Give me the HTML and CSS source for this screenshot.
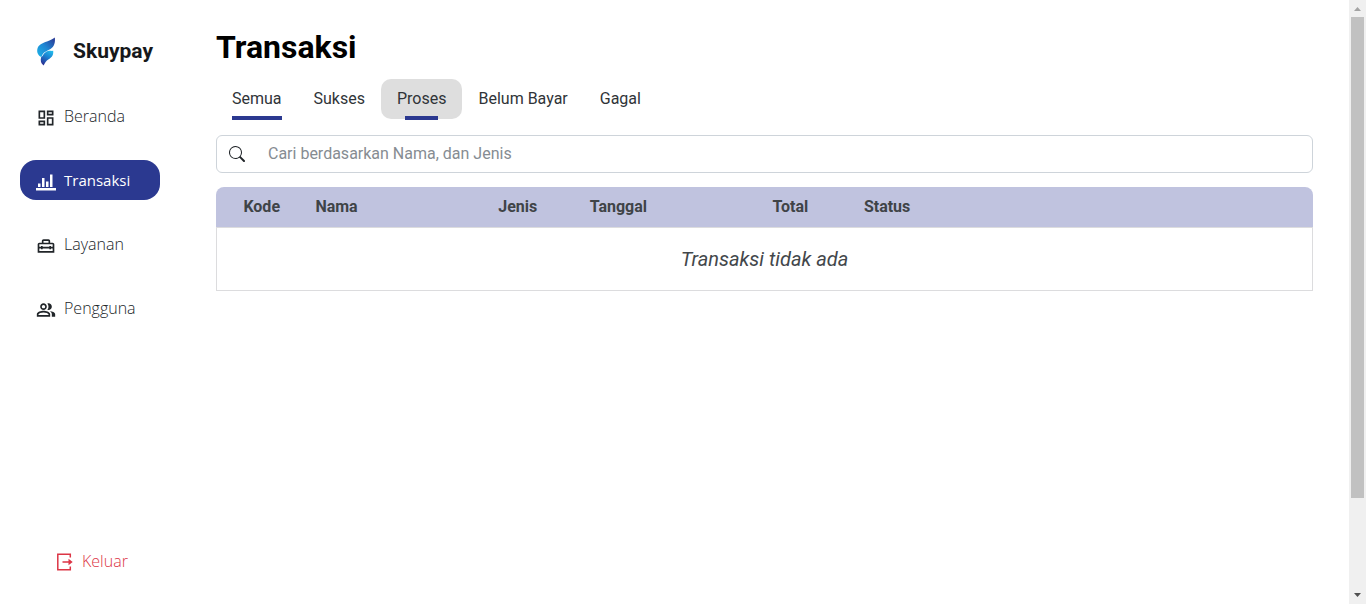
FILE: index.html
```html
<!DOCTYPE html>
<html lang="id">
<head>
<meta charset="utf-8">
<meta name="viewport" content="width=device-width, initial-scale=1">
<title>Skuypay - Transaksi</title>
<link rel="stylesheet" href="styles.css">
</head>
<body>
<div class="app">
  <aside class="sidebar">
    <a class="brand" href="#">
      <svg class="brand-logo" viewBox="0 0 20 30" aria-hidden="true">
        <defs>
          <linearGradient id="wing" x1="0" y1="1" x2="1" y2="0">
            <stop offset="0" stop-color="#1cb4e8"/><stop offset=".5" stop-color="#1f86d3"/><stop offset="1" stop-color="#2b3390"/>
          </linearGradient>
          <linearGradient id="tail" x1=".8" y1="0" x2=".3" y2="1">
            <stop offset="0" stop-color="#22b9ea"/><stop offset=".45" stop-color="#1a7fd0"/><stop offset="1" stop-color="#2b2f92"/>
          </linearGradient>
        </defs>
        <path fill="url(#wing)" d="M18.800 1.500C19.500 6.500 18.200 10.800 14.500 13C10.500 15.200 7 16 5.500 21C2 19.500.8 16.500 1.300 13.200C2.200 8.500 6.500 7 11 5.400C14.500 4.200 17 3.100 18.800 1.500Z"/>
        <path fill="url(#tail)" d="M17.200 14.800C17.600 18.800 16.200 21.200 12.700 23.200C9.900 24.800 9 26.900 7.600 29.500C4.800 27.500 4.300 24.700 5.100 21.300C7 20.500 7.500 16.300 12 15C14 14.500 15.800 15.200 17.200 14.800Z"/>
      </svg>
      <span>Skuypay</span>
    </a>
    <nav class="menu" aria-label="Menu utama">
      <a class="menu-item" href="#">
        <svg viewBox="0 0 24 24" aria-hidden="true"><path d="M19 5v2h-4V5h4M9 5v6H5V5h4m10 8v6h-4v-6h4M9 17v2H5v-2h4M21 3h-8v6h8V3zM11 3H3v10h8V3zm10 8h-8v10h8V11zm-10 4H3v6h8v-6z"/></svg>
        <span>Beranda</span>
      </a>
      <a class="menu-item menu-item-active" href="#" aria-current="page">
        <svg viewBox="0 0 20 20" aria-hidden="true"><path d="M0 16h20v2.500H0zM2 11.500h2.500V15H2zM6 6h2.500v9H6zM10 9.500h2.500V15H10zM14 2.500h2.500V15H14z"/></svg>
        <span>Transaksi</span>
      </a>
      <a class="menu-item" href="#">
        <svg viewBox="0 0 24 24" aria-hidden="true"><path d="M20 8h-3V6c0-1.100-.9-2-2-2H9c-1.100 0-2 .9-2 2v2H4c-1.100 0-2 .9-2 2v10h20V10c0-1.100-.9-2-2-2zM9 6h6v2H9V6zm11 12H4v-3h2v1h2v-1h8v1h2v-1h2v3zm-2-5v-1h-2v1H8v-1H6v1H4v-3h16v3h-2z"/></svg>
        <span>Layanan</span>
      </a>
      <a class="menu-item" href="#">
        <svg viewBox="0 0 24 24" aria-hidden="true"><path d="M16.670 13.130C18.040 14.060 19 15.320 19 17v3h4v-3c0-2.180-3.570-3.470-6.330-3.870zM15 12c2.210 0 4-1.790 4-4s-1.790-4-4-4c-.47 0-.91.1-1.330.24C14.500 5.270 15 6.580 15 8s-.5 2.730-1.330 3.760c.42.14.86.24 1.330.24zM9 12c2.210 0 4-1.790 4-4s-1.790-4-4-4-4 1.790-4 4 1.790 4 4 4zm0-6c1.100 0 2 .9 2 2s-.9 2-2 2-2-.9-2-2 .9-2 2-2zM9 13c-2.670 0-8 1.340-8 4v3h16v-3c0-2.660-5.330-4-8-4zm6 5H3v-.99C3.200 16.290 6.300 15 9 15s5.800 1.290 6 2v1z"/></svg>
        <span>Pengguna</span>
      </a>
    </nav>
    <button class="logout" type="button">
      <svg viewBox="0 0 18 18" aria-hidden="true"><path fill="none" stroke="currentColor" stroke-width="1.500" d="M14.300 4.500V1.300H1.800v15.400h12.500v-3.200M6.500 9H14"/><path fill="currentColor" d="M12.500 5.800 16.700 9l-4.200 3.200z"/></svg>
      <span>Keluar</span>
    </button>
  </aside>

  <main class="content">
    <h1 class="title">Transaksi</h1>
    <div class="tabs" role="tablist" aria-label="Status transaksi">
      <button class="tab tab-active" type="button" role="tab" aria-selected="true">Semua</button>
      <button class="tab" type="button" role="tab" aria-selected="false">Sukses</button>
      <button class="tab tab-hover" type="button" role="tab" aria-selected="false">Proses</button>
      <button class="tab" type="button" role="tab" aria-selected="false">Belum Bayar</button>
      <button class="tab" type="button" role="tab" aria-selected="false">Gagal</button>
    </div>
    <label class="search">
      <svg viewBox="0 0 16 16" aria-hidden="true"><path d="M11.742 10.344a6.500 6.500 0 1 0-1.397 1.398h-.001c.03.04.062.078.098.115l3.850 3.850a1 1 0 0 0 1.415-1.414l-3.850-3.850a1.007 1.007 0 0 0-.115-.1zM12 6.500a5.500 5.500 0 1 1-11 0 5.500 5.500 0 0 1 11 0z"/></svg>
      <input type="text" placeholder="Cari berdasarkan Nama, dan Jenis" aria-label="Cari berdasarkan Nama, dan Jenis">
    </label>
    <table class="table">
      <colgroup>
        <col class="col-1"><col class="col-2"><col class="col-1"><col class="col-2"><col class="col-1"><col>
      </colgroup>
      <thead>
        <tr><th class="code" scope="col">Kode</th><th scope="col">Nama</th><th scope="col">Jenis</th><th scope="col">Tanggal</th><th scope="col">Total</th><th scope="col">Status</th></tr>
      </thead>
      <tbody>
        <tr><td class="empty" colspan="6">Transaksi tidak ada</td></tr>
      </tbody>
    </table>
  </main>

  <div class="scrollbar" aria-hidden="true">
    <svg class="arrow-up" viewBox="0 0 17 17"><path d="M5 11h7L8.500 7z"/></svg>
    <div class="track"><div class="thumb"></div></div>
    <svg class="arrow-down" viewBox="0 0 17 17"><path d="M5 6h7l-3.500 4z"/></svg>
  </div>
</div>
</body>
</html>
```
FILE: styles.css
```css
* {
  box-sizing: border-box;
}

body {
  margin: 0;
  background: #fff;
  color: #212529;
  font: 16px/24px Roboto, sans-serif;
}

button,
input {
  font: inherit;
  color: inherit;
}

a {
  color: inherit;
  text-decoration: none;
}

.app {
  display: grid;
  grid-template-columns: 180px minmax(0, 1fr) 17px;
  min-height: 100vh;
}

.sidebar {
  display: flex;
  flex-direction: column;
  padding: 36px 20px 31px;
  font-family: "Open Sans", sans-serif;
  font-weight: 300;
}

.brand {
  display: flex;
  align-items: center;
  gap: 17px;
  padding-left: 16px;
  color: #16181b;
  font: bold 21px/30px Roboto, sans-serif;
}

.brand-logo {
  width: 20px;
  height: 30px;
}

.menu {
  display: flex;
  flex-direction: column;
  gap: 24px;
  margin-top: 30px;
}

.menu-item {
  display: flex;
  align-items: center;
  gap: 8px;
  height: 40px;
  padding: 0 16px;
  border-radius: 16px;
}

.menu-item svg {
  width: 20px;
  height: 20px;
  margin-top: 4px;
  fill: currentColor;
}

.menu-item-active {
  background: #2b3990;
  color: #fff;
  font-size: 15px;
  font-weight: 400;
}

.logout {
  display: flex;
  align-items: center;
  gap: 8px;
  margin-top: auto;
  padding: 0 0 0 36px;
  border: 0;
  background: none;
  color: #dc3545;
}

.logout svg {
  flex: none;
  width: 18px;
  height: 18px;
  margin-top: 2px;
}

.content {
  padding: 28px 36px;
}

.title {
  margin: 0;
  color: #000;
  font-size: 32px;
  line-height: 38px;
  font-weight: 700;
}

.tabs {
  display: flex;
  margin-top: 13px;
}

.tab {
  position: relative;
  height: 40px;
  padding: 0 16px;
  border: 0;
  border-radius: 10px;
  background: none;
  color: #303438;
}

.tab-active::after,
.tab-hover::after {
  content: "";
  position: absolute;
  left: 16px;
  right: 16px;
  bottom: -1px;
  height: 4px;
  background: #2b3990;
}

.tab-hover {
  background: #dedede;
}

.tab-hover::after {
  left: 24px;
  right: 24px;
}

.search {
  display: flex;
  align-items: center;
  height: 38px;
  margin-top: 16px;
  padding: 0 12px;
  border: 1px solid #ced4da;
  border-radius: 6px;
}

.search svg {
  flex: none;
  width: 16px;
  height: 16px;
  fill: #212529;
}

.search input {
  flex: 1;
  min-width: 0;
  padding: 0 0 0 23px;
  border: 0;
  outline: 0;
  background: none;
}

.search input::placeholder {
  color: #868c92;
  opacity: 1;
}

.table {
  width: 100%;
  margin-top: 14px;
  border-spacing: 0;
  table-layout: fixed;
}

.col-1 {
  width: 8.3333%;
}

.col-2 {
  width: 16.6667%;
}

.table th {
  height: 40px;
  padding: 0 8px;
  background: #c0c3df;
  color: #3f4347;
  font-weight: 700;
  text-align: left;
}

.table th:first-child {
  border-top-left-radius: 8px;
}

.table th:last-child {
  border-top-right-radius: 8px;
}

.table .code {
  text-align: center;
}

.empty {
  height: 64px;
  padding: 0;
  border: 1px solid #dcdcde;
  color: #43474b;
  font-size: 20px;
  font-style: italic;
  text-align: center;
}

.scrollbar {
  display: flex;
  flex-direction: column;
  background: #f0f0f0;
}

.scrollbar svg {
  flex: none;
  width: 17px;
  height: 17px;
}

.arrow-up {
  fill: #a3a3a3;
}

.arrow-down {
  fill: #505050;
}

.track {
  flex: 1;
  padding: 0 2px;
}

.thumb {
  height: 84.4%;
  background: #c1c1c1;
}
```
